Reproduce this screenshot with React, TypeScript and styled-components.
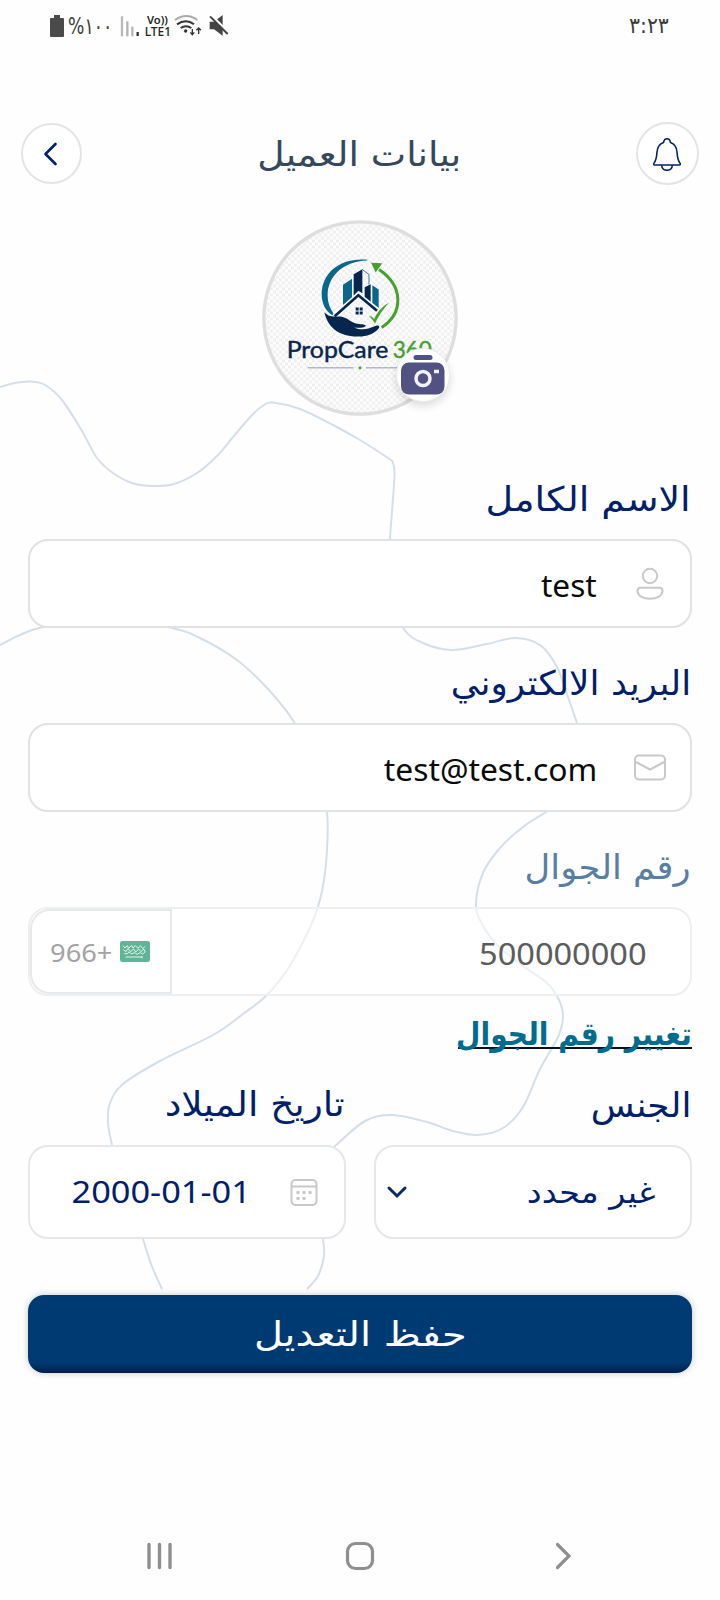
import React from "react";
import styled, { createGlobalStyle } from "styled-components";

const GlobalStyle = createGlobalStyle`
  * { box-sizing: border-box; }
  body { margin: 0; background: #fefefe; font-family: "DejaVu Sans", "Noto Sans", sans-serif; }
  svg { direction: ltr; flex: none; }
`;

const navy = "#00206a";

const Screen = styled.main`
  position: relative;
  width: 720px;
  height: 1600px;
  display: flex;
  flex-direction: column;
  overflow: hidden;
  background: #fefefe;
`;

const Backdrop = styled.svg`
  position: absolute;
  inset: 0;
  pointer-events: none;
`;

const StatusBar = styled.div`
  position: relative;
  height: 52px;
  padding: 0 51px 0 50px;
  display: flex;
  align-items: center;
  justify-content: space-between;
  direction: ltr;
  color: #3c3c3c;
`;

const StatusGroup = styled.div`
  display: flex;
  align-items: center;
`;

/* A single line of text with a set size, colour and horizontal stretch. */
const Line = styled.span<{ $size: number; $color?: string; $stretch?: number; $origin?: string; $weight?: number; $font?: string; $shift?: number }>`
  display: inline-block;
  white-space: nowrap;
  font-size: ${(p) => p.$size}px;
  font-weight: ${(p) => p.$weight ?? 400};
  font-family: ${(p) => p.$font ?? `"DejaVu Sans", sans-serif`};
  color: ${(p) => p.$color ?? navy};
  transform: translateY(${(p) => p.$shift ?? 0}px) scaleX(${(p) => p.$stretch ?? 1});
  transform-origin: ${(p) => p.$origin ?? "right"} center;
`;

const BatteryText = styled.div`
  width: 54px;
  padding-left: 4px;
  line-height: 24px;
`;

const Header = styled.header`
  position: relative;
  margin-top: 70px;
  height: 63px;
  padding: 0 21px;
  display: flex;
  align-items: center;
  justify-content: space-between;
  direction: ltr;
`;

const RoundButton = styled.button<{ $size: number }>`
  width: ${(p) => p.$size}px;
  height: ${(p) => p.$size}px;
  padding: 0 2px 0 0;
  border: 2px solid #e4e4e4;
  border-radius: 50%;
  background: #fff;
  display: flex;
  align-items: center;
  justify-content: center;
`;

const Title = styled.h1`
  margin: 0;
  line-height: 60px;
  font-weight: 400;
  direction: rtl;
`;

const Avatar = styled.div`
  position: relative;
  align-self: center;
  margin-top: 35px;
  width: 196px;
  height: 196px;
`;

const CameraBadge = styled.button`
  position: absolute;
  left: 134px;
  top: 128px;
  width: 54px;
  height: 54px;
  padding: 0;
  border: 1px solid #ececec;
  border-radius: 50%;
  background: #fff;
  box-shadow: 0 4px 8px rgba(0, 0, 0, 0.14);
`;

const Form = styled.form`
  position: relative;
  direction: rtl;
  padding: 28px 28px 0;
  display: flex;
  flex-direction: column;
`;

const Label = styled.label`
  height: 60px;
  margin: 28px 1px 7px;
  line-height: 60px;
  display: block;
`;

const Box = styled.div<{ $disabled?: boolean; $height?: number }>`
  height: ${(p) => p.$height ?? 89}px;
  border: 2px solid ${(p) => (p.$disabled ? "#eeeff0" : p.$height ? "#e6e7eb" : "#e1e2e3")};
  border-radius: 20px;
  background: ${(p) => (p.$disabled ? "rgba(255,255,255,.55)" : "#fff")};
  display: flex;
  align-items: center;
  justify-content: space-between;
`;

const IconSlot = styled.span`
  width: 52px;
  margin-right: 14px;
  display: flex;
  justify-content: center;
`;

const Value = styled.span<{ $inset: number }>`
  flex: 1;
  direction: ltr;
  text-align: right;
  padding-right: ${(p) => p.$inset}px;
  line-height: 60px;
`;

const Prefix = styled.div`
  width: 142px;
  height: 85px;
  padding: 0 20px;
  border: 2px solid #e8e9ea;
  border-radius: 20px 0 0 20px;
  display: flex;
  align-items: center;
`;

const SelectText = styled.span`
  padding-right: 35px;
  line-height: 60px;
`;

const SelectArrow = styled.svg`
  margin-left: 10px;
`;

const ChangeLink = styled.a`
  align-self: flex-start;
  height: 50px;
  width: 234px;
  margin-top: 14px;
  line-height: 50px;
  background: linear-gradient(#07141f, #07141f) 0 37px / 100% 2px no-repeat;
`;

const Row = styled.div`
  display: grid;
  grid-template-columns: 318px 318px;
  column-gap: 28px;
  margin-top: -10px;
`;

const Submit = styled.button`
  height: 78px;
  margin-top: 56px;
  padding: 0;
  border: 0;
  border-radius: 16px;
  background: linear-gradient(#003a72 0, #003a72 87%, #00204a 100%);
  box-shadow: 0 0 7px rgba(0, 0, 0, 0.22);
  line-height: 78px;
`;

const NavBar = styled.nav`
  position: relative;
  margin-top: auto;
  height: 88px;
  padding: 0 147px 0 146px;
  display: grid;
  grid-template-columns: 1fr 30px 1fr;
  align-items: center;
  direction: ltr;

  & > :last-child { justify-self: end; }
`;

type Point = [number, number];

/* Catmull-Rom spline through the points, written as cubic segments. */
const smooth = (pts: Point[]) =>
  pts.slice(0, -1).reduce((d, p, i) => {
    const a = pts[i - 1] ?? p;
    const n = pts[i + 1];
    const b = pts[i + 2] ?? n;
    return `${d} C${p[0] + (n[0] - a[0]) / 6},${p[1] + (n[1] - a[1]) / 6} ${n[0] - (b[0] - p[0]) / 6},${n[1] - (b[1] - p[1]) / 6} ${n[0]},${n[1]}`;
  }, `M${pts[0][0]},${pts[0][1]}`);

const contours: Point[][] = [
  [[0, 387], [15, 383], [30, 381.5], [45, 385], [62, 400], [82, 431], [97, 458], [113, 473], [132, 483], [153, 486], [174, 484], [197, 473], [217, 456], [233, 437], [253, 414], [264, 405], [273, 402.5], [300, 409], [333, 425], [360, 440], [388, 458], [393, 463], [394.5, 475], [392.5, 505], [390, 539], [388, 590], [403, 628], [423, 643], [452, 650], [487, 644], [515, 638], [540, 645], [557, 667], [568, 697], [577, 723]],
  [[548, 811], [523, 827], [500, 848], [483, 873], [476, 903], [481, 922], [497, 945], [523, 966], [547, 983], [559, 1000], [563, 1017], [558, 1037], [540, 1069], [523, 1107], [503, 1128], [478, 1135], [453, 1131], [427, 1122], [392, 1115], [365, 1121], [334, 1147]],
  [[323, 1239], [324, 1256], [318, 1276], [307, 1289]],
  [[0, 645], [20, 635], [43, 627], [105, 616], [172, 628], [200, 638], [237, 660], [268, 689], [294, 722], [318, 769], [327, 812], [327, 850], [324, 880], [317, 910], [304, 940], [287, 970], [267, 995], [243, 1014], [213, 1035], [160, 1061], [123, 1084], [110, 1103], [108, 1123], [112, 1145]],
  [[143, 1239], [151, 1264], [162, 1289]],
];

const sans = `"Noto Sans", sans-serif`;

const Logo = () => (
  <svg width="196" height="196" viewBox="66 31.5 588 588">
    <defs>
      <pattern id="checks" width="18" height="18" patternUnits="userSpaceOnUse">
        <rect width="18" height="18" fill="#fdfdfd" />
        <path d="M0 0h9v9H0zM9 9h9v9H9z" fill="#f0f0f0" />
      </pattern>
    </defs>
    <circle cx="360" cy="325.500" r="288.500" fill="url(#checks)" stroke="#dedede" strokeWidth="10" />
    <path d="M382 151C300 144 246 190 245 254c0 28 12 50 32 63l7-2c-12-14-21-34-21-58 0-53 42-101 119-104z" fill="#08678a" />
    <path d="M417 180c74 50 74 130 8 174" fill="none" stroke="#46a12f" strokeWidth="9" />
    <path d="M393 160l34 1-20 28z" fill="#46a12f" />
    <path d="M309 226l27-18v61l-27 20zM397 227l19 13v58l-19-15z" fill="#08678a" />
    <path d="M341 194l26-15v72l-12-7-14 15zM374 233l18-9v59l-18-15z" fill="#06264d" />
    <path d="M367 180l20 15v30" fill="none" stroke="#08678a" strokeWidth="2.500" />
    <path d="M283 320l72-62 58 46" fill="none" stroke="#fdfdfd" strokeWidth="17" />
    <path d="M284 320l71-63 56 47" fill="none" stroke="#06264d" strokeWidth="8" />
    <path d="M347 294h9v9h-9zM359 294h9v9h-9zM347 306h9v9h-9zM359 306h9v9h-9z" fill="#06264d" />
    <path d="M253 308c11 12 22 13 39 13 20 0 29 6 42 15 15 10 33 6 43 11 2 8-24 9-36 6 27 13 45 4 67-4 8-3 13 2 8 8-15 17-37 25-65 24-55-1-88-28-98-73z" fill="#06264d" />
    <path d="M386 319c8 1 12 4 16 10 11-23 27-40 45-49-17 18-29 36-42 62-6-9-12-17-19-23z" fill="#46a12f" />
    <text x="140" y="445" fontFamily="Lato, sans-serif" fontSize="67" fill="#06264d" stroke="#06264d" strokeWidth="1.200" textLength="305" lengthAdjust="spacingAndGlyphs">PropCare</text>
    <text x="458" y="445" fontFamily="Lato, sans-serif" fontSize="67" fill="#46a12f" stroke="#46a12f" strokeWidth="1.200" textLength="118" lengthAdjust="spacingAndGlyphs">360</text>
    <path d="M203 475h138M378 475h140" stroke="#7889a1" strokeWidth="2.500" />
    <rect x="356" y="471" width="8" height="8" rx="2" fill="#46a12f" />
  </svg>
);

const CameraIcon = () => (
  <svg width="52" height="52" viewBox="0 0 52 52">
    <path d="M19 8.500h14" stroke="#515184" strokeWidth="5" strokeLinecap="round" />
    <rect x="4" y="13.500" width="43.500" height="32" rx="8" fill="#515184" />
    <circle cx="26" cy="29.500" r="7" fill="none" stroke="#f2f2f8" strokeWidth="3.500" />
    <path d="M37 22.500h5" stroke="#f2f2f8" strokeWidth="3.500" />
  </svg>
);

const StatusIcons = () => (
  <svg width="114" height="26" viewBox="354 39 342 78" fill="none">
    <path d="M366 49v60" stroke="#b9b9b9" strokeWidth="7" />
    <path d="M382 64v45" stroke="#b4b4b4" strokeWidth="7" />
    <path d="M397 80v29" stroke="#b9b9b9" strokeWidth="7" />
    <path d="M413 96v12" stroke="#333" strokeWidth="7" />
    <text x="441" y="71" fontFamily="Noto Sans" fontWeight="600" fontSize="31" fill="#222" textLength="63" lengthAdjust="spacingAndGlyphs">Vo))</text>
    <text x="434" y="109" fontFamily="Noto Sans" fontWeight="500" fontSize="35" fill="#222" textLength="79" lengthAdjust="spacingAndGlyphs">LTE1</text>
    <path d="M525 60q34-24 67 0" stroke="#aaa" strokeWidth="6" />
    <path d="M531 73q27-19 51 0M542 84q16-11 32 0" stroke="#333" strokeWidth="6" />
    <circle cx="557" cy="93" r="5" fill="#333" />
    <path d="M577 87v16m-6-6l6 7 6-7M596 102V84m-7 7l7-7 7 7" stroke="#333" strokeWidth="4" />
    <path d="M629 65h13l26-20v62l-26-19h-13z" fill="#444" />
    <path d="M629 42l57 57" stroke="#fefefe" strokeWidth="9" />
    <path d="M630 49l53 53" stroke="#444" strokeWidth="6" />
  </svg>
);

export default function App() {
  return (
    <Screen dir="rtl">
      <GlobalStyle />
      <Backdrop width="720" height="1600">
        {contours.map((c, i) => (
          <path key={i} d={smooth(c)} fill="none" stroke="#d5dfea" strokeWidth="2" />
        ))}
      </Backdrop>

      <StatusBar>
        <StatusGroup>
          <svg width="14" height="22" viewBox="0 0 14 22">
            <path d="M4 0h6v3h3q1 0 1 1v17q0 1-1 1H1q-1 0-1-1V4q0-1 1-1h3z" fill="#4a4a4a" />
          </svg>
          <BatteryText>
            <Line $size={23} $color="#3c3c3c" $origin="left" $stretch={0.75} $shift={1}>%١٠٠</Line>
          </BatteryText>
          <StatusIcons />
        </StatusGroup>
        <Line $size={22} $color="#3c3c3c" $stretch={0.93} $shift={-1}>٣:٢٣</Line>
      </StatusBar>

      <Header>
        <RoundButton $size={61}>
          <svg width="20" height="26" viewBox="0 0 20 26">
            <path d="M14.500 3L4.500 13l10 10" fill="none" stroke={navy} strokeWidth="2.600" strokeLinecap="round" strokeLinejoin="round" />
          </svg>
        </RoundButton>
        <Title>
          <Line $size={34} $color="#34495e" $origin="center" $stretch={1.105} $shift={1}>بيانات العميل</Line>
        </Title>
        <RoundButton $size={63}>
          <svg width="30" height="34" viewBox="0 0 96 108" fill="none" stroke={navy} strokeWidth="5" strokeLinejoin="round">
            <path d="M6 84c8-10 9-21 10-36 1-19 9-27 21-31 1-7 5-12 11-12s10 5 11 12c12 4 20 12 21 31 1 15 2 26 10 36q2 5-3 5H9q-5 0-3-5z" />
            <path d="M31 90q1 16 17 16t17-16" />
          </svg>
        </RoundButton>
      </Header>

      <Avatar>
        <Logo />
        <CameraBadge type="button"><CameraIcon /></CameraBadge>
      </Avatar>

      <Form>
        <Label><Line $size={34} $stretch={1.117} $shift={-3}>الاسم الكامل</Line></Label>
        <Box>
          <IconSlot>
            <svg width="28" height="34" viewBox="0 0 28 34" fill="none" stroke="#c9c9c9" strokeWidth="2">
              <circle cx="14" cy="9" r="7.200" />
              <path d="M4.500 20.800h19q3 0 3 3c0 5-5.500 8-12.500 8s-12.500-3-12.500-8q0-3 3-3z" />
            </svg>
          </IconSlot>
          <Value $inset={27}><Line $size={31} $color="#0a0a0a" $font={sans} $stretch={1.02} $shift={5}>test</Line></Value>
        </Box>

        <Label><Line $size={34} $stretch={1.054} $shift={-3}>البريد الالكتروني</Line></Label>
        <Box>
          <IconSlot>
            <svg width="32" height="27" viewBox="0 0 32 27" fill="none" stroke="#c9c9c9" strokeWidth="2">
              <rect x="1" y="1.500" width="30" height="24" rx="4" />
              <path d="M2 8l14 7.500L30 8" strokeLinejoin="round" />
            </svg>
          </IconSlot>
          <Value $inset={27}><Line $size={31} $color="#0a0a0a" $font={sans} $stretch={1.025} $shift={5}>test@test.com</Line></Value>
        </Box>

        <Label><Line $size={34} $color="#587ea5" $stretch={1.04} $shift={-3}>رقم الجوال</Line></Label>
        <Box $disabled>
          <Value $inset={43}><Line $size={31} $color="#5c5c5c" $font={sans} $stretch={1.05} $shift={5}>500000000</Line></Value>
          <Prefix>
            <svg width="30" height="21" viewBox="0 0 90 63">
              <rect width="90" height="63" rx="7" fill="#61b596" />
              <path d="M9 14l6 7 7-7 4 8 9-9 4 8 7-7 8 8 7-8 8 9 6-7M10 26l8 6 6-9 8 9 9-8 6 9 9-9 7 8 8-8 5 9M13 38h10l4-6 7 7 10-4 7 5 10-5 7 4 7-6" fill="none" stroke="#e5f4ee" strokeWidth="3" />
              <path d="M17 48h49M66 45v7" stroke="#e5f4ee" strokeWidth="3" />
            </svg>
            <Value $inset={8}><Line $size={26} $color="#a3a3a3" $font={sans} $stretch={1.05} $shift={3}>966+</Line></Value>
          </Prefix>
        </Box>

        <ChangeLink><Line $size={32} $weight={700} $color="#006d8f" $stretch={0.88} $shift={-1}>تغيير رقم الجوال</Line></ChangeLink>

        <Row>
          <div>
            <Label><Line $size={34} $stretch={1.054} $shift={-3}>الجنس</Line></Label>
            <Box $height={94}>
              <SelectText><Line $size={30} $stretch={1.115} $shift={3}>غير محدد</Line></SelectText>
              <SelectArrow width="22" height="14" viewBox="0 0 22 14">
                <path d="M3 3l8 8 8-8" fill="none" stroke="#062b63" strokeWidth="3" strokeLinecap="round" />
              </SelectArrow>
            </Box>
          </div>
          <div>
            <Label><Line $size={34} $stretch={1.1} $shift={-4}>تاريخ الميلاد</Line></Label>
            <Box $height={94}>
              <IconSlot>
                <svg width="28" height="27" viewBox="0 0 28 27" fill="none" stroke="#c9c9c9" strokeWidth="2">
                  <rect x="1.500" y="1" width="25" height="25" rx="4" />
                  <path d="M2 7.500h24" />
                  <path d="M8 13.500h.01M14 13.500h.01M20 13.500h.01M8 19.500h.01M14 19.500h.01" strokeWidth="3.600" strokeLinecap="round" />
                </svg>
              </IconSlot>
              <Value $inset={27}><Line $size={31} $font={sans} $stretch={1.108} $shift={2}>2000-01-01</Line></Value>
            </Box>
          </div>
        </Row>

        <Submit type="button"><Line $size={34} $color="#fff" $origin="center" $stretch={1.176}>حفظ التعديل</Line></Submit>
      </Form>

      <NavBar>
        <svg width="27" height="28" viewBox="0 0 27 28" stroke="#8f8f8f" strokeWidth="3.400" strokeLinecap="round">
          <path d="M3 2.500v23M13.500 2.500v23M24 2.500v23" />
        </svg>
        <svg width="30" height="30" viewBox="0 0 30 30">
          <rect x="2.500" y="2.500" width="25" height="25" rx="8" fill="none" stroke="#8f8f8f" strokeWidth="3.200" />
        </svg>
        <svg width="18" height="28" viewBox="0 0 18 28">
          <path d="M2.500 2.500L14 14 2.500 25.500" fill="none" stroke="#8f8f8f" strokeWidth="3.200" strokeLinecap="round" />
        </svg>
      </NavBar>
    </Screen>
  );
}
